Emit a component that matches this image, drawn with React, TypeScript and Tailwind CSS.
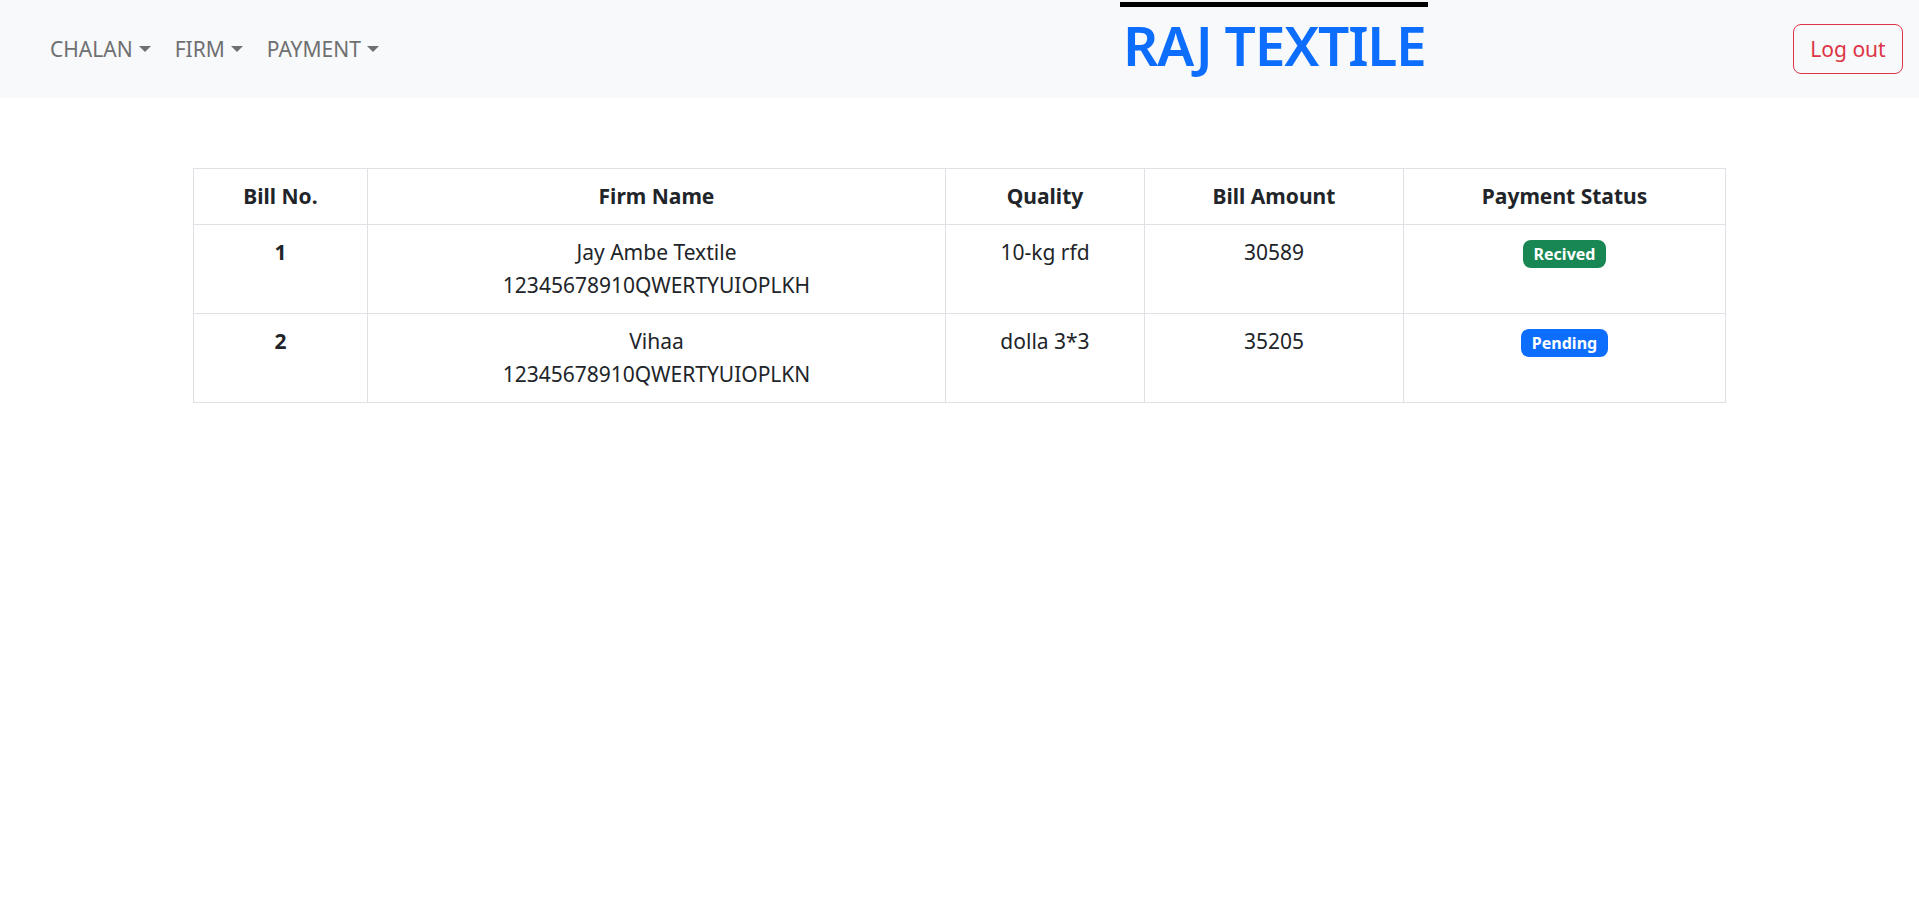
import { useState } from 'react';

interface Bill {
  no: number;
  firm: string;
  gst: string;
  quality: string;
  amount: number;
  status: 'Recived' | 'Pending';
}

const bills: Bill[] = [
  { no: 1, firm: 'Jay Ambe Textile', gst: '12345678910QWERTYUIOPLKH', quality: '10-kg rfd', amount: 30589, status: 'Recived' },
  { no: 2, firm: 'Vihaa', gst: '12345678910QWERTYUIOPLKN', quality: 'dolla 3*3', amount: 35205, status: 'Pending' },
];

const menus = ['CHALAN', 'FIRM', 'PAYMENT'];

function Caret() {
  return <span className="ml-[6px] inline-block h-0 w-0 border-x-[6px] border-t-[6px] border-x-transparent border-t-[#6f7071]"></span>;
}

export default function App() {
  const [open, setOpen] = useState<string | null>(null);

  return (
    <div className="min-h-screen bg-white text-[#212529] font-['Noto_Sans','Open_Sans',sans-serif] text-[21px] leading-[33px]">
      <nav className="h-[98px] bg-[#f8f9fa] flex items-center pl-[39px] pr-[16px]">
        <ul className="flex items-center gap-[2px] w-[1081px]">
          {menus.map(m => (
            <li key={m}>
              <button
                onClick={() => setOpen(open === m ? null : m)}
                className="flex items-center px-[11px] text-[#6f7071] hover:text-[#333]"
              >
                {m}
                <Caret />
              </button>
            </li>
          ))}
        </ul>
        <div className="self-start pt-[2px]">
          <h1 className="inline-block border-t-[5px] border-black pt-[5px] pl-[3px] pr-[2px] text-[55px] leading-[66px] font-semibold tracking-[-1.2px] text-[#0d6efd]">
            RAJ TEXTILE
          </h1>
        </div>
        <button className="ml-auto h-[50px] w-[110px] rounded-[8px] border border-[#dc3545] text-[#dc3545] hover:bg-[#dc3545] hover:text-white">
          Log out
        </button>
      </nav>

      <main className="pt-[70px]">
        <table className="mx-auto w-[1533px] table-fixed border-collapse">
          <colgroup>
            <col className="w-[174px]" />
            <col className="w-[578px]" />
            <col className="w-[199px]" />
            <col className="w-[259px]" />
            <col />
          </colgroup>
          <thead>
            <tr>
              {['Bill No.', 'Firm Name', 'Quality', 'Bill Amount', 'Payment Status'].map(h => (
                <th key={h} className="border border-[#dee2e6] p-[11px] text-center font-bold">{h}</th>
              ))}
            </tr>
          </thead>
          <tbody>
            {bills.map(b => (
              <tr key={b.no}>
                <th className="border border-[#dee2e6] p-[11px] text-center align-top font-bold">{b.no}</th>
                <td className="border border-[#dee2e6] p-[11px] text-center align-top">
                  <div>{b.firm}</div>
                  <div>{b.gst}</div>
                </td>
                <td className="border border-[#dee2e6] p-[11px] text-center align-top">{b.quality}</td>
                <td className="border border-[#dee2e6] p-[11px] text-center align-top">{b.amount}</td>
                <td className="border border-[#dee2e6] p-[11px] text-center align-top">
                  <span
                    className={`mt-[4px] inline-block align-top rounded-[8px] px-[11px] py-[6px] text-[16px] leading-[16px] font-bold text-white ${
                      b.status === 'Recived' ? 'bg-[#198754]' : 'bg-[#0d6efd]'
                    }`}
                  >
                    {b.status}
                  </span>
                </td>
              </tr>
            ))}
          </tbody>
        </table>
      </main>
    </div>
  );
}
